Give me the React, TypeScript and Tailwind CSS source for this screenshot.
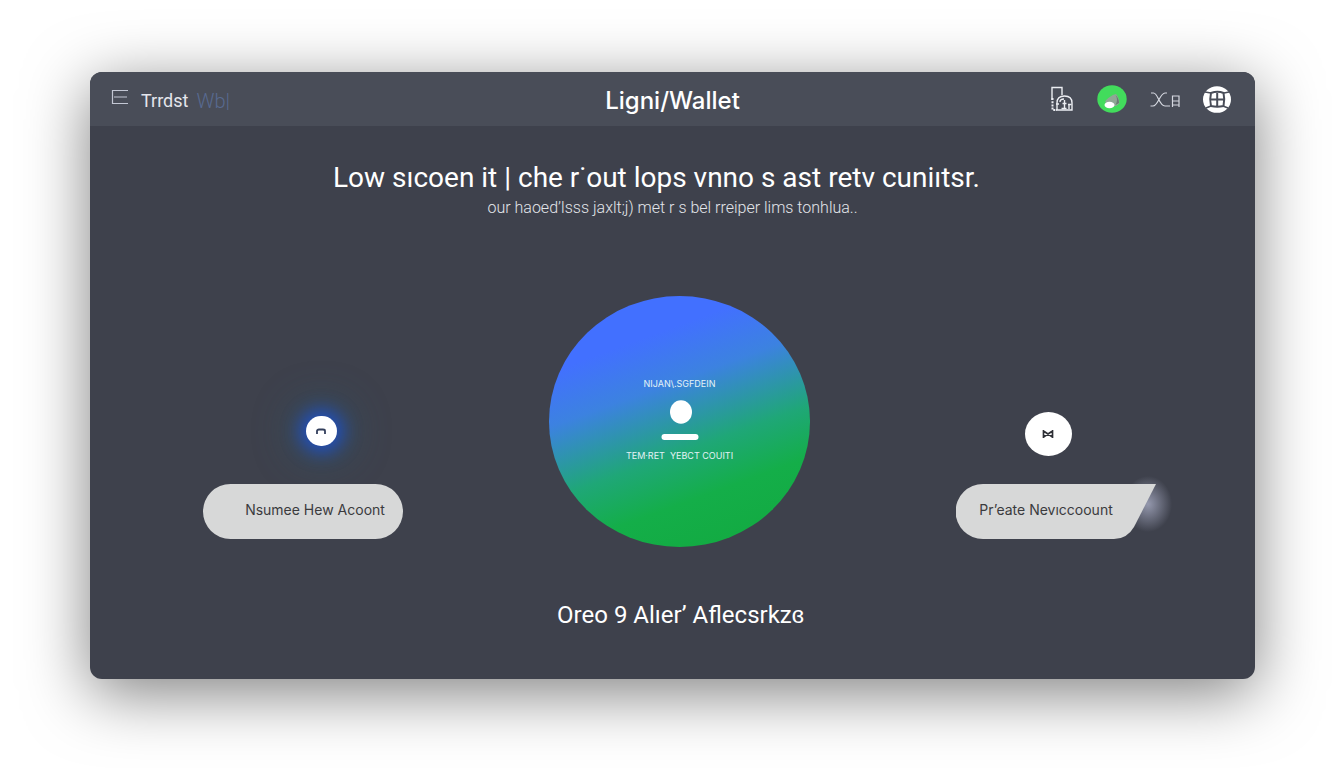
import type { ReactNode } from "react";

interface AccountActionProps {
  badge: ReactNode;
  children: ReactNode;
}

function MenuIcon() {
  return (
    <svg width="19" height="16" viewBox="0 0 19 16" fill="none" stroke="#c3c7d4" strokeWidth="1.2">
      <path d="M18 1.5H2.5v13H18M4 8h13" />
    </svg>
  );
}

function VaultIcon() {
  return (
    <svg width="24" height="26" viewBox="0 0 24 26" fill="none" stroke="#eceef3" strokeWidth="1.4">
      <path d="M1 14V1.5h10V9" />
      <path d="M1.5 12v12H6" strokeDasharray="2 1.2" strokeWidth="2" />
      <path d="M6 24v-7c0-4 2.5-7 7.5-7s7.5 3 7.5 7v7H5" />
      <path d="M5 18h3M9 16c0-2 2-3 4-3M13.5 14v9M11.5 17.5h4M10.5 22.5h5M18 18v5M20.5 18.5H17" />
    </svg>
  );
}

function ProfileIcon() {
  return (
    <svg width="30" height="28" viewBox="0 0 30 28">
      <ellipse cx="15" cy="14" rx="14.7" ry="13.8" fill="#42dc5c" />
      <path d="M8 17c2-4 7-7 11-8 2 2 3.5 6 3.5 9.5L19 21h-5z" fill="#8fa795" />
      <path d="M18.5 10c2 3 2 6 0 10l3.500-2c0-3-1-6-3.500-8z" fill="#687d72" />
      <ellipse cx="12.5" cy="20" rx="5" ry="3.3" fill="#fff" />
    </svg>
  );
}

function SwapIcon() {
  return (
    <svg width="32" height="18" viewBox="0 0 32 18" fill="none" stroke="#d5d8e0" strokeWidth="1.2">
      <path d="M2 3h2.5C9 3 10 16 16 16h5M18 3h-2C11 3 9 16 4 16H1.5" />
      <path d="M23.5 17V6H30v11M23.5 11H30M24 15h6" />
    </svg>
  );
}

function GridIcon() {
  return (
    <svg width="28" height="27" viewBox="0 0 28 27">
      <ellipse cx="14" cy="13.5" rx="14" ry="13.3" fill="#fff" />
      <path
        d="M8 7c4-1.5 9-1.5 12.500 0 1 4 1 8.500 0 13-4 1-8.500 1-12.500 0-1-4-1-9 0-13zM14.2 7v13M7.5 13.5H21"
        fill="none"
        stroke="#494d58"
        strokeWidth="2"
      />
      <path d="M2 6l6 1M26 6l-5 1M3 22l5-2M25 22l-5-2" stroke="#494d58" strokeWidth="1.5" />
    </svg>
  );
}

const ACTIONS = [
  { label: "Vault", icon: <VaultIcon /> },
  { label: "Profile", icon: <ProfileIcon /> },
  { label: "Swap", icon: <SwapIcon /> },
  { label: "Apps", icon: <GridIcon /> },
];

function Header() {
  return (
    <header className="grid h-[54px] grid-cols-[1fr_auto_1fr] items-center bg-[#494d58] pl-5 pr-6">
      <div className="flex items-center gap-3">
        <button aria-label="Menu" className="pb-1">
          <MenuIcon />
        </button>
        <a href="#" className="flex gap-2 pt-1 font-['Roboto',sans-serif] text-lg text-[#e4e6ec]">
          Trrdst <span className="text-xl leading-7 font-light text-[#586a90]">Wb|</span>
        </a>
      </div>
      <span className="pl-1 pt-1 text-2xl font-medium text-white">Ligni/Wallet</span>
      <nav className="flex items-center justify-end gap-[22px]">
        {ACTIONS.map((action) => (
          <button key={action.label} aria-label={action.label}>
            {action.icon}
          </button>
        ))}
      </nav>
    </header>
  );
}

function AccountAction({ badge, children }: AccountActionProps) {
  return (
    <div className="flex w-[200px] flex-col items-center pb-2">
      <div className="flex h-[72px] items-start justify-center">{badge}</div>
      {children}
    </div>
  );
}

export default function App() {
  return (
    <div className="min-h-screen bg-white py-[72px] pl-[90px] pr-[89px] font-['Inter','Liberation_Sans',sans-serif]">
      <main className="overflow-hidden rounded-xl bg-[#3e414c] shadow-[0_14px_64px_rgba(0,0,0,0.5)]">
        <Header />

        <section className="pt-8 text-center font-['Roboto','Liberation_Sans',sans-serif]">
          <h1 className="pr-8 text-[28px] leading-10 text-white">
            Low sıcoen it | che r˙out lops vnno s ast retv cuniıtsr.
          </h1>
          <p className="text-base leading-5 font-light text-[#e3e5ea]">
            our haoed’lsss jaxlt;j) met r s bel rreiper lims tonhlua..
          </p>
        </section>

        <section className="flex items-end justify-between pl-[113px] pr-[99px] pt-[78px]">
          <AccountAction
            badge={
              <div className="ml-9 mt-1 flex h-[30px] w-[31px] items-center justify-center rounded-full bg-white shadow-[0_0_18px_6px_#1f4fc4,0_0_40px_14px_rgba(40,100,130,0.4)]">
                <svg width="10" height="7" viewBox="0 0 10 7" fill="none" stroke="#333f5c" strokeWidth="1.8">
                  <path d="M1 6V3q0-1.5 2-1.5h4q2 0 2 1.5v3" />
                </svg>
              </div>
            }
          >
            <button className="h-[55px] w-full rounded-full bg-[#d7d8d8] pb-1 pl-6 text-sm text-[#3b3b3e]">
              Nsumee Hew Acoont
            </button>
          </AccountAction>

          <div className="flex h-[251px] w-[261px] flex-col items-center rounded-[50%] bg-[linear-gradient(160deg,#4270ff_22%,#3c82e0_38%,#1fa777_59%,#14ae49_74%,#12a93e)] pt-20 text-[9px] leading-4 text-[#e3f3f5]">
            <span>NIJAN\.SGFDEIN</span>
            <svg width="38" height="40" viewBox="0 0 38 40" fill="#fff" className="my-2">
              <ellipse cx="20" cy="12" rx="11" ry="11.8" />
              <rect x="0.5" y="34" width="37" height="6" rx="3" />
            </svg>
            <span className="whitespace-pre">TEM·RET  YEBCT COUITI</span>
          </div>

          <AccountAction
            badge={
              <div className="mr-4 flex h-11 w-[47px] items-center justify-center rounded-[50%] bg-white">
                <svg width="12" height="8" viewBox="0 0 12 8" fill="none" stroke="#2e3036" strokeWidth="1.7">
                  <path d="M1.5 0v8M10.5 0v8M1.5 1l9 6M1.5 7l9-6" />
                </svg>
              </div>
            }
          >
            <div className="relative w-full">
              {/* glow behind the cut corner */}
              <div className="absolute -right-4 -top-2 h-14 w-12 bg-[radial-gradient(closest-side,rgba(170,174,198,0.8),transparent)]" />
              <button className="relative h-[55px] w-full bg-[#d7d8d8] pb-1 pr-5 text-sm text-[#3b3b3e] [clip-path:path('M27_0H200L178_43Q171_55_158_55H27A27_27_0_0_1_27_0Z')]">
                Pr’eate Nevıccoount
              </button>
            </div>
          </AccountAction>
        </section>

        <h2 className="pb-12 pl-4 pt-[52px] text-center font-['Roboto','Liberation_Sans',sans-serif] text-2xl leading-8 text-white">
          Oreo 9 Alıer’ Aflecsrkzɞ
        </h2>
      </main>
    </div>
  );
}
